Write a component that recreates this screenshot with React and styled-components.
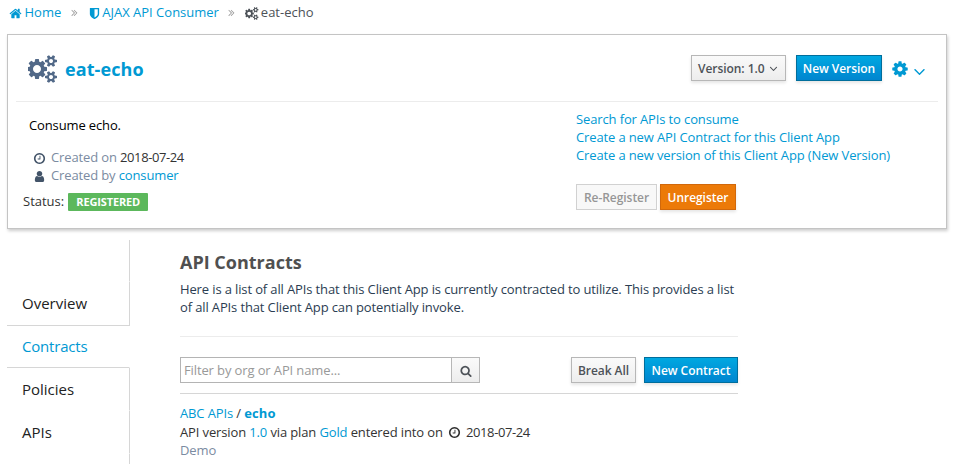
import React from "react";
import styled, { createGlobalStyle, css } from "styled-components";

const GlobalStyle = createGlobalStyle`
  * { box-sizing: border-box; }
  html, body { margin: 0; padding: 0; background: #fff; overflow: hidden; }
  body {
    font-family: "Open Sans", "Noto Sans", sans-serif;
    font-size: 13px;
    line-height: 18px;
    letter-spacing: -0.13px;
    color: #333;
  }
`;

const ICONS = {
  home: "M1472 992v480q0 26-19 45t-45 19h-384v-384h-256v384h-384q-26 0-45-19t-19-45v-480q0-1 .5-3t.5-3l575-474 575 474q1 2 1 6zm223-69l-62 74q-8 9-21 11h-3q-13 0-21-7l-692-577-692 577q-12 8-24 7-13-2-21-11l-62-74q-8-10-7-23.5t11-21.5l719-599q32-26 76-26t76 26l244 204v-195q0-14 9-23t23-9h192q14 0 23 9t9 23v408l219 182q10 8 11 21.5t-7 23.5z",
  shield: "M1344 960v-640h-448v1137q119-63 213-137 235-184 235-360zm192-768v768q0 86-33.5 170.5t-83 150-118 127.5-126.5 103-121 77.5-89.5 49.5-42.5 20q-12 6-26 6t-26-6q-16-7-42.5-20t-89.5-49.5-121-77.5-126.5-103-118-127.5-83-150-33.5-170.5v-768q0-26 19-45t45-19h1152q26 0 45 19t19 45z",
  cog: "M1152 896q0-106-75-181t-181-75-181 75-75 181 75 181 181 75 181-75 75-181zm512-109v222q0 12-8 23t-20 13l-185 28q-19 54-39 91 35 50 107 138 10 12 10 25t-9 23q-27 37-99 108t-94 71q-12 0-26-9l-138-108q-44 23-91 38-16 136-29 186-7 28-36 28h-222q-14 0-24.5-8.5t-11.5-21.5l-28-184q-49-16-90-37l-141 107q-10 9-25 9-14 0-25-11-126-114-165-168-7-10-7-23 0-12 8-23 15-21 51-66.5t54-70.5q-27-50-41-99l-183-27q-13-2-21-12.5t-8-23.5v-222q0-12 8-23t19-13l186-28q14-46 39-92-40-57-107-138-10-12-10-24 0-10 9-23 26-36 98.5-107.5t94.5-71.5q13 0 26 10l138 107q44-23 91-38 16-136 29-186 7-28 36-28h222q14 0 24.5 8.5t11.5 21.5l28 184q49 16 90 37l142-107q9-9 24-9 13 0 25 10 129 119 165 170 7 8 7 22 0 12-8 23-15 21-51 66.5t-54 70.5q26 50 41 98l183 28q13 2 21 12.5t8 23.5z",
  cogs: "M832 896q0-106-75-181t-181-75-181 75-75 181 75 181 181 75 181-75 75-181zm768 512q0-52-38-90t-90-38-90 38-38 90q0 53 37.5 90.5t90.5 37.5 90.5-37.5 37.5-90.5zm0-1024q0-52-38-90t-90-38-90 38-38 90q0 53 37.5 90.5t90.5 37.5 90.5-37.5 37.5-90.5zm-384 421v185q0 10-7 19.5t-16 10.5l-155 24q-11 35-32 76 34 48 90 115 7 11 7 20 0 12-7 19-23 30-82.5 89.5t-78.5 59.5q-11 0-21-7l-115-90q-37 19-77 31-11 108-23 155-7 24-30 24h-186q-11 0-20-7.5t-10-17.5l-23-153q-34-10-75-31l-118 89q-7 7-20 7-11 0-21-8-144-133-144-160 0-9 7-19 10-14 41-53t47-61q-23-44-35-82l-152-24q-10-1-17-9.500t-7-19.500v-185q0-10 7-19.500t16-10.500l155-24q11-35 32-76-34-48-90-115-7-11-7-20 0-12 7-20 22-30 82-89t79-59q11 0 21 7l115 90q34-18 77-32 11-108 23-154 7-24 30-24h186q11 0 20 7.500t10 17.500l23 153q34 10 75 31l118-89q8-7 20-7 11 0 21 8 144 133 144 160 0 8-7 19-12 16-42 54t-45 60q23 48 34 82l152 23q10 2 17 10.500t7 19.500zm640 533v140q0 16-149 31-12 27-30 52 51 113 51 138 0 4-4 7-122 71-124 71-8 0-46-47t-52-68q-20 2-30 2t-30-2q-14 21-52 68t-46 47q-2 0-124-71-4-3-4-7 0-25 51-138-18-25-30-52-149-15-149-31v-140q0-16 149-31 13-29 30-52-51-113-51-138 0-4 4-7 4-2 35-20t59-34 30-16q8 0 46 46.500t52 67.500q20-2 30-2t30 2q51-71 92-112l6-2q4 0 124 70 4 3 4 7 0 25-51 138 17 23 30 52 149 15 149 31zm0-1024v140q0 16-149 31-12 27-30 52 51 113 51 138 0 4-4 7-122 71-124 71-8 0-46-47t-52-68q-20 2-30 2t-30-2q-14 21-52 68t-46 47q-2 0-124-71-4-3-4-7 0-25 51-138-18-25-30-52-149-15-149-31v-140q0-16 149-31 13-29 30-52-51-113-51-138 0-4 4-7 4-2 35-20t59-34 30-16q8 0 46 46.500t52 67.500q20-2 30-2t30 2q51-71 92-112l6-2q4 0 124 70 4 3 4 7 0 25-51 138 17 23 30 52 149 15 149 31z",
  clock: "M1024 544v448q0 14-9 23t-23 9h-320q-14 0-23-9t-9-23v-64q0-14 9-23t23-9h224v-352q0-14 9-23t23-9h64q14 0 23 9t9 23zm416 352q0-148-73-273t-198-198-273-73-273 73-198 198-73 273 73 273 198 198 273 73 273-73 198-198 73-273zm224 0q0 209-103 385.5t-279.5 279.5-385.5 103-385.5-103-279.5-279.5-103-385.5 103-385.5 279.5-279.5 385.5-103 385.5 103 279.5 279.5 103 385.5z",
  user: "M1536 1399q0 109-62.5 187t-150.5 78h-854q-88 0-150.5-78t-62.5-187q0-85 8.5-160.5t31.5-152 58.5-131 94-89 134.5-34.5q131 128 313 128t313-128q76 0 134.5 34.5t94 89 58.5 131 31.5 152 8.5 160.5zm-256-887q0 159-112.5 271.5t-271.5 112.5-271.5-112.5-112.5-271.5 112.5-271.5 271.5-112.5 271.5 112.5 112.5 271.5z",
  search: "M1216 832q0-185-131.5-316.5t-316.5-131.5-316.5 131.5-131.5 316.5 131.5 316.5 316.5 131.5 316.5-131.5 131.5-316.5zm512 832q0 52-38 90t-90 38q-54 0-90-38l-343-342q-179 124-399 124-143 0-273.5-55.5t-225-150-150-225-55.5-273.5 55.5-273.5 150-225 225-150 273.5-55.5 273.5 55.5 225 150 150 225 55.5 273.5q0 220-124 399l343 343q37 37 37 90z",
  down: "M1395 736q0 13-10 23l-466 466q-10 10-23 10t-23-10l-466-466q-10-10-10-23t10-23l50-50q10-10 23-10t23 10l393 393 393-393q10-10 23-10t23 10l50 50q10 10 10 23z",
  next: "M979 960q0 13-10 23l-466 466q-10 10-23 10t-23-10l-50-50q-10-10-10-23t10-23l393-393-393-393q-10-10-10-23t10-23l50-50q10-10 23-10t23 10l466 466q10 10 10 23zm384 0q0 13-10 23l-466 466q-10 10-23 10t-23-10l-50-50q-10-10-10-23t10-23l393-393-393-393q-10-10-10-23t10-23l50-50q10-10 23-10t23 10l466 466q10 10 10 23z",
};

const Svg = styled.svg`
  display: block;
  flex: none;
  fill: currentColor;
`;

function Icon({ name, size = 13 }) {
  const w = name === "cogs" ? 1920 : 1792;
  return (
    <Svg width={(size * w) / 1792} height={size} viewBox={`0 0 ${w} 1792`}>
      <path d={ICONS[name]} />
    </Svg>
  );
}

const Page = styled.div`
  width: 957px;
  height: 464px;
  overflow: hidden;
  padding: 3px 10px 0 7px;
`;

const Link = styled.a`
  color: #0099d3;
  ${(p) =>
    p.$bold &&
    css`
      font-weight: 700;
      letter-spacing: 0.15px;
    `}
`;

const Breadcrumb = styled.nav`
  display: flex;
  height: 18px;
  padding-left: 1.5px;
  letter-spacing: 0;
`;

const Crumb = styled.span`
  display: flex;
  align-items: center;
  gap: ${(p) => p.$gap}px;
  color: ${(p) => (p.$current ? "#4d5258" : "#0099d3")};
  svg { margin-top: 2px; }
`;

const Separator = styled.span`
  display: flex;
  align-items: center;
  justify-content: center;
  width: ${(p) => p.$width}px;
  color: #9c9c9c;
  padding-top: 1px;
`;

const Panel = styled.section`
  margin-top: 13px;
  width: 940px;
  height: 195px;
  border: 1px solid #c4c4c4;
  box-shadow: 1px 2px 3px rgba(0, 0, 0, 0.2);
  padding: 0 8px;
`;

const PanelHeader = styled.header`
  display: flex;
  justify-content: space-between;
  height: 67px;
  padding: 20px 9px 0 12px;
  border-bottom: 1px solid #ececec;
`;

const Title = styled.h1`
  display: flex;
  gap: 7px;
  margin: 0;
  height: 28px;
  align-items: center;
  color: #0099d3;
  font-size: 18px;
  line-height: 26px;
  font-weight: 700;
  letter-spacing: 0.1px;
  svg { color: #526988; }
`;

const HeaderActions = styled.div`
  display: flex;
  align-items: flex-start;
`;

const variants = {
  default: css`
    color: #4d5258;
    border-color: #b7b7b7;
    background: linear-gradient(#fafafa, #ededed);
  `,
  primary: css`
    color: #fff;
    border-color: #006e9c;
    background: linear-gradient(#00a8e1, #0085cf);
  `,
  warning: css`
    color: #fff;
    border-color: #d1680b;
    background: #ec7a08;
  `,
  disabled: css`
    color: #969696;
    border-color: #d1d1d1;
    background: #f8f8f8;
    box-shadow: none;
  `,
};

const Button = styled.button`
  display: flex;
  align-items: center;
  justify-content: center;
  gap: 2px;
  width: ${(p) => p.$width}px;
  height: 26px;
  margin: 0 0 0 ${(p) => p.$left || 0}px;
  padding: 2px 0 0;
  border: 1px solid;
  font: 600 12px/20px "Open Sans", sans-serif;
  letter-spacing: -0.05px;
  white-space: nowrap;
  box-shadow: 0 2px 3px rgba(3, 3, 3, 0.1);
  ${(p) => variants[p.$kind || "default"]}
`;

const VersionButton = styled(Button)`
  justify-content: flex-start;
  gap: 2px;
  padding-left: 6px;
  svg { margin-top: -1px; }
`;

const Settings = styled.a`
  display: flex;
  gap: 1px;
  margin-left: 9px;
  padding-top: 5px;
  color: #0099d3;
  svg + svg { margin-top: 2px; }
`;

const PanelBody = styled.div`
  display: flex;
`;

const Details = styled.div`
  width: 560px;
  padding: 14px 0 0 7px;
`;

const Description = styled.p`
  margin: 0 0 14px 6px;
  color: #000;
`;

const Meta = styled.div`
  display: flex;
  align-items: center;
  height: 18px;
  margin-left: 10px;
  color: #7b8ba1;
  white-space: pre;
  svg { color: #435469; margin: 2px 5px 0 0; }
`;

const DateText = styled.span`
  color: #333;
  letter-spacing: -0.4px;
`;

const Status = styled.div`
  display: flex;
  align-items: flex-start;
  gap: 4px;
  margin-top: 8px;
  letter-spacing: 0;
`;

const Badge = styled.span`
  width: 80px;
  height: 18px;
  margin-top: 1px;
  background: #5cb85c;
  border-radius: 1px;
  color: #fff;
  text-align: center;
  font-size: 11px;
  line-height: 18px;
  font-weight: 700;
  letter-spacing: -0.15px;
`;

const Shortcuts = styled.div`
  display: flex;
  flex-direction: column;
  padding-top: 8px;
`;

const Registration = styled.div`
  display: flex;
  margin-top: 20px;
`;

const Columns = styled.div`
  display: flex;
  margin-top: 11px;
`;

const SideNav = styled.nav`
  width: 123px;
`;

const NavItem = styled.a`
  display: block;
  height: ${(p) => p.$height || 43}px;
  padding: ${(p) => (p.$active ? 9 : 10)}px 0 0 15px;
  font-size: 15px;
  line-height: 22px;
  letter-spacing: ${(p) => (p.$active ? "-0.2px" : "0")};
  color: ${(p) => (p.$active ? "#0099d3" : "#222")};
  border-right: 1px solid ${(p) => (p.$active ? "#fff" : "#d6d6d6")};
  border-bottom: 1px solid ${(p) => (p.$line ? "#d6d6d6" : "#fff")};
`;

const Content = styled.main`
  width: 558px;
  margin-left: 50px;
`;

const Heading = styled.h2`
  margin: 9px 0 5px;
  font-size: 18px;
  line-height: 26px;
  font-weight: 700;
  letter-spacing: 0;
  color: #505050;
`;

const Intro = styled.p`
  margin: 0;
  height: 57px;
  color: #2b3d52;
  border-bottom: 1px solid #ececec;
`;

const Toolbar = styled.div`
  display: flex;
  height: 57px;
  padding-top: 20px;
  border-bottom: 1px solid #d6d6d6;
`;

const Filter = styled.input`
  width: 271px;
  height: 26px;
  padding: 0 3px;
  border: 1px solid #b4b4b4;
  border-right: 0;
  border-radius: 0;
  font: 13px/18px "Open Sans", sans-serif;
  letter-spacing: -0.12px;
  color: #333;
  &::placeholder { color: #999; opacity: 1; }
`;

const SearchButton = styled(Button)`
  width: 29px;
  box-shadow: none;
`;

const Actions = styled.div`
  display: flex;
  margin-left: auto;
`;

const Contract = styled.article`
  padding-top: 9px;
`;

const Line = styled.div`
  display: flex;
  align-items: center;
  height: ${(p) => p.$height || 18}px;
  white-space: pre;
  color: ${(p) => (p.$muted ? "#7b8ba1" : "#333")};
  svg { margin: 1px 5px 0 2px; }
`;

export default function App() {
  return (
    <Page>
      <GlobalStyle />
      <Breadcrumb>
        <Crumb $gap={3}><Icon name="home" /><Link>Home</Link></Crumb>
        <Separator $width={27}><Icon name="next" size={11} /></Separator>
        <Crumb $gap={1}><Icon name="shield" /><Link>AJAX API Consumer</Link></Crumb>
        <Separator $width={26}><Icon name="next" size={11} /></Separator>
        <Crumb $gap={2} $current><Icon name="cogs" />eat-echo</Crumb>
      </Breadcrumb>

      <Panel>
        <PanelHeader>
          <Title><Icon name="cogs" size={28} />eat-echo</Title>
          <HeaderActions>
            <VersionButton $width={95}>Version: 1.0 <Icon name="down" size={13} /></VersionButton>
            <Button $kind="primary" $width={86} $left={10}>New Version</Button>
            <Settings><Icon name="cog" size={18} /><Icon name="down" size={19} /></Settings>
          </HeaderActions>
        </PanelHeader>
        <PanelBody>
          <Details>
            <Description>Consume echo.</Description>
            <Meta><Icon name="clock" />Created on <DateText>2018-07-24</DateText></Meta>
            <Meta><Icon name="user" />Created by <Link>consumer</Link></Meta>
            <Status>Status: <Badge>REGISTERED</Badge></Status>
          </Details>
          <Shortcuts>
            <Link>Search for APIs to consume</Link>
            <Link>Create a new API Contract for this Client App</Link>
            <Link>Create a new version of this Client App (New Version)</Link>
            <Registration>
              <Button $kind="disabled" $width={81}>Re-Register</Button>
              <Button $kind="warning" $width={76} $left={3}>Unregister</Button>
            </Registration>
          </Shortcuts>
        </PanelBody>
      </Panel>

      <Columns>
        <SideNav>
          <NavItem as="div" $height={42} />
          <NavItem $height={44} $line>Overview</NavItem>
          <NavItem $active $line $height={42}>Contracts</NavItem>
          <NavItem>Policies</NavItem>
          <NavItem>APIs</NavItem>
          <NavItem as="div" />
        </SideNav>
        <Content>
          <Heading>API Contracts</Heading>
          <Intro>
            Here is a list of all APIs that this Client App is currently contracted to utilize. This provides a list
            of all APIs that Client App can potentially invoke.
          </Intro>
          <Toolbar>
            <Filter placeholder="Filter by org or API name..." />
            <SearchButton><Icon name="search" size={12} /></SearchButton>
            <Actions>
              <Button $width={65}>Break All</Button>
              <Button $kind="primary" $width={94} $left={8}>New Contract</Button>
            </Actions>
          </Toolbar>
          <Contract>
            <Line $height={20}><Link>ABC APIs</Link> / <Link $bold>echo</Link></Line>
            <Line>API version <Link>1.0</Link> via plan <Link>Gold</Link> entered into on <Icon name="clock" /><DateText>2018-07-24</DateText></Line>
            <Line $muted>Demo</Line>
          </Contract>
        </Content>
      </Columns>
    </Page>
  );
}
